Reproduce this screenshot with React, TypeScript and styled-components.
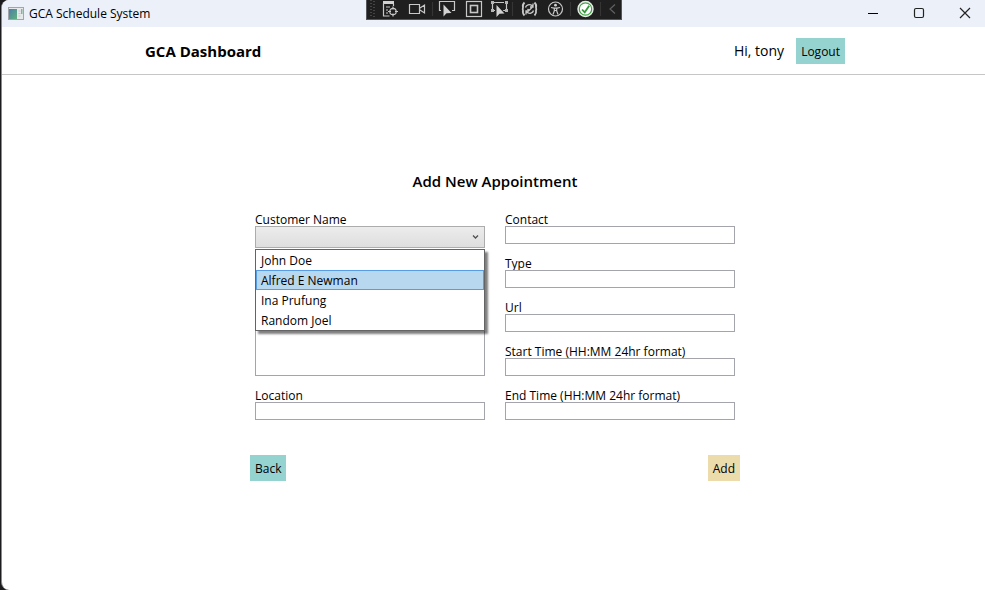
import { useState } from "react";
import styled, { createGlobalStyle } from "styled-components";

const GlobalStyle = createGlobalStyle`
  * { box-sizing: border-box; }
  html, body, #root { height: 100%; }
  body {
    margin: 0;
    background: #1c1c1e;
    color: #000;
    font: 12px/16px "Open Sans", "Noto Sans", sans-serif;
  }
  button, input, select, textarea { font: inherit; color: inherit; }
`;

const Window = styled.div`
  min-height: 100%;
  margin-left: 1px;
  border-left: 1px solid #8a8a8c;
  border-radius: 8px 0 0 8px;
  background: #fff;
  overflow: hidden;
`;

const TitleBar = styled.div`
  position: relative;
  display: flex;
  align-items: center;
  justify-content: space-between;
  height: 27px;
  padding-left: 6px;
  background: #ecf0f9;
`;

const AppName = styled.div`
  display: flex;
  align-items: center;
  gap: 5px;
`;

const WindowControls = styled.div`
  display: flex;
`;

const WindowButton = styled.button`
  display: grid;
  place-items: center;
  width: 46px;
  height: 27px;
  padding: 0 0 2px 6px;
  border: 0;
  background: none;
`;

const DebugBar = styled.div`
  position: absolute;
  top: 0;
  left: 50%;
  transform: translateX(-50%);
  display: flex;
  width: 256px;
  height: 20px;
  border: 1px solid #55555a;
  border-width: 0 1px 1px;
  background: #1f1f1f;
`;

const Header = styled.header`
  padding-left: 3px;
  border-bottom: 1px solid #c6c6c6;
`;

const HeaderInner = styled.div`
  display: flex;
  align-items: center;
  justify-content: space-between;
  max-width: 700px;
  height: 47px;
  margin: 0 auto;
  padding-top: 1px;
`;

const Brand = styled.h1`
  margin: 0;
  font-size: 15px;
  line-height: 20px;
  font-weight: 700;
`;

const Account = styled.div`
  display: flex;
  align-items: center;
  gap: 12px;
`;

const Greeting = styled.span`
  font-size: 14px;
  line-height: 20px;
`;

const ActionButton = styled.button<{ $tone?: "teal" | "sand" }>`
  height: 26px;
  padding: 2px 5px 0;
  border: 0;
  background: ${(p) => (p.$tone === "sand" ? "#ecdcab" : "#95d3d1")};
`;

const Main = styled.main`
  padding: 96px 0 20px 3px;
`;

const Form = styled.form`
  max-width: 490px;
  margin: 0 auto;
`;

const Title = styled.h2`
  margin: 0 0 19px;
  font-size: 15px;
  line-height: 20px;
  font-weight: 600;
  text-align: center;
`;

const Columns = styled.div`
  display: grid;
  grid-template-columns: 1fr 1fr;
  gap: 20px;
  padding: 0 5px;
`;

const Column = styled.div`
  display: flex;
  flex-direction: column;
  gap: 10px;
`;

const FieldBox = styled.div`
  display: flex;
  flex-direction: column;
`;

const Label = styled.label`
  padding-top: 4px;
  line-height: 12px;
`;

const TextInput = styled.input`
  width: 100%;
  height: 18px;
  padding: 0 3px;
  border: 1px solid #a3a4ac;
  background: #fff;
`;

const TextArea = styled.textarea`
  flex: 1;
  width: 100%;
  min-height: 60px;
  padding: 2px 3px;
  border: 1px solid #a3a4ac;
  resize: none;
`;

const Combo = styled.div`
  position: relative;
  display: grid;
  align-items: center;

  & > * { grid-area: 1 / 1; }
  & > svg { justify-self: end; margin-right: 6px; pointer-events: none; }
`;

const Select = styled.select`
  width: 100%;
  height: 22px;
  padding: 0 5px;
  border: 1px solid #acacac;
  border-radius: 0;
  outline: 0;
  appearance: none;
  background: linear-gradient(#ececec, #dedede);
`;

const Menu = styled.ul`
  position: absolute;
  z-index: 1;
  top: 100%;
  left: 0;
  right: 0;
  margin: 1px 0 0;
  padding: 0;
  border: 1px solid #646464;
  background: #fff;
  box-shadow: 3px 3px 2px rgba(0, 0, 0, 0.5);
  list-style: none;
`;

const Option = styled.li<{ $active: boolean }>`
  padding: 2px 4px 0;
  border: 1px solid ${(p) => (p.$active ? "#569de5" : "transparent")};
  background: ${(p) => (p.$active ? "#b8d8f0" : "transparent")};
  cursor: default;
`;

const Actions = styled.div`
  display: flex;
  justify-content: space-between;
  margin-top: 35px;
`;

const customers = ["John Doe", "Alfred E Newman", "Ina Prufung", "Random Joel"];

function Field({ id, label }: { id: string; label: string }) {
  return (
    <FieldBox>
      <Label htmlFor={id}>{label}</Label>
      <TextInput id={id} type="text" />
    </FieldBox>
  );
}

function CustomerField() {
  const [open, setOpen] = useState(true);
  const [value, setValue] = useState("");
  const [active, setActive] = useState(1);

  return (
    <FieldBox>
      <Label htmlFor="customer">Customer Name</Label>
      <Combo>
        <Select
          id="customer"
          value={value}
          onChange={(e) => setValue(e.target.value)}
          onMouseDown={(e) => {
            e.preventDefault();
            setOpen(!open);
          }}
        >
          <option value="" />
          {customers.map((name) => (
            <option key={name}>{name}</option>
          ))}
        </Select>
        <svg width="7" height="7" viewBox="0 0 7 7" fill="none" stroke="#505050" strokeWidth="1.300">
          <path d="M1 1.500 3.500 4 6 1.500" />
        </svg>
        {open && (
          <Menu role="listbox" aria-label="Customer Name">
            {customers.map((name, i) => (
              <Option
                key={name}
                role="option"
                aria-selected={i === active}
                $active={i === active}
                onMouseEnter={() => setActive(i)}
                onClick={() => {
                  setValue(name);
                  setOpen(false);
                }}
              >
                {name}
              </Option>
            ))}
          </Menu>
        )}
      </Combo>
    </FieldBox>
  );
}

function AppIcon() {
  return (
    <svg width="16" height="14" viewBox="0 0 16 14">
      <defs>
        <linearGradient id="pane" x1="0" y1="0" x2="1" y2="1">
          <stop offset="0" stopColor="#4d7fa8" />
          <stop offset="1" stopColor="#5fb27c" />
        </linearGradient>
      </defs>
      <rect x=".5" y=".5" width="15" height="12" fill="#e6e8ea" stroke="#a2a6aa" />
      <rect x="1" y="2" width="8" height="10" fill="url(#pane)" />
      <path d="M10.5 4h2M10.5 6.500h2M10.5 9h2" stroke="#c6cacd" />
      <rect x="13" y="2" width="1.500" height="5" fill="#7fb59a" />
    </svg>
  );
}

function DebugToolbar() {
  return (
    <DebugBar role="toolbar" aria-label="Debug">
      <svg width="254" height="19" viewBox="0 0 254 19" fill="none" stroke="#c8c8c8" strokeWidth="1.200">
        <path d="M4 0v18M7 1v18" stroke="#454545" strokeWidth="2" strokeDasharray="1 2" />
        <path d="M65.500 2v14M145.500 2v14M203.500 2v14M233.500 2v14" stroke="#353535" />

        <rect x="16" y="1" width="11" height="3" fill="#d2d2d2" stroke="none" />
        <path d="M16.500 3v13h6M19 7h4M19 10h2M19 13h2M26.500 4v2" />
        <circle cx="26" cy="11.500" r="3.200" />
        <path d="M26 6.500v3M26 13.500v3M21 11.500h3M28 11.500h3" />

        <path d="M42.500 4.500h10v9h-10zM53 8l4.500-3v8L53 10" />

        <path d="M74 10.500h-1.500V1.500h15v9H85" />
        <path d="M76.500 4.500v12l3-3.200 5-.3z" fill="#d2d2d2" stroke="#1f1f1f" strokeWidth="2" paintOrder="stroke" />

        <rect x="99.500" y="1.500" width="15" height="15" />
        <rect x="103.500" y="5.500" width="7" height="7" strokeWidth="1.600" />

        <path d="M127 2.500h10M125.500 4v6.500M139.500 4v6.500M126 10.500h2M135 10.500h4" />
        <path d="M124 1h3v3h-3zM138 1h3v3h-3zM138 9h3v3h-3zM124 9h3v3h-3z" fill="#b4b4b4" stroke="none" />
        <path d="M129.500 5v12l3-3.200 5-.3z" fill="#d2d2d2" stroke="#1f1f1f" strokeWidth="2" paintOrder="stroke" />

        <path d="M157.500 2.500c-2 2-2 3.500-1.500 5-.5 1.500-.5 2 0 3-.5 2 0 3.500 1.500 5M167.500 2.500c2 2 2 3.500 1.500 5 .5 1.500.5 2 0 3 .5 2 0 3.500-1.500 5" strokeWidth="1.800" />
        <path d="M158.500 7.500c.5-2.500 4-4 7-1.500M166 3.500V7h-3M166.500 10.500c-.5 2.500-4 4-7 1.500M159 14.500V11h3M160.500 9l1.500 1.500 3-3" strokeWidth="1.300" />

        <circle cx="188.500" cy="9" r="7" />
        <circle cx="188.500" cy="5.200" r="1.400" fill="#d2d2d2" stroke="none" />
        <path d="M184 7.500l3 .7h3l3-.7M187.300 8v3l-1.300 3.500M189.700 8v3l1.300 3.500M187.300 10.500h2.400" />

        <circle cx="218.500" cy="9" r="7.600" fill="#fff" stroke="#e4f0e4" />
        <circle cx="218.500" cy="9" r="6.200" fill="#fff" stroke="#43a047" strokeWidth="1.200" />
        <path d="m215 9.500 2.700 2.800 4.500-6.600" stroke="#2f9a38" strokeWidth="1.800" />

        <path d="m248 4.500-5 4.500 5 4.500" stroke="#606060" />
      </svg>
    </DebugBar>
  );
}

export default function App() {
  return (
    <>
      <GlobalStyle />
      <Window>
        <TitleBar>
          <AppName>
            <AppIcon />
            <span>GCA Schedule System</span>
          </AppName>
          <DebugToolbar />
          <WindowControls>
            <WindowButton type="button" aria-label="Minimize">
              <svg width="12" height="12" stroke="#000">
                <path d="M1 6.500h10" />
              </svg>
            </WindowButton>
            <WindowButton type="button" aria-label="Maximize">
              <svg width="12" height="12" fill="none" stroke="#222" strokeWidth="1.200">
                <rect x="1.500" y="1.500" width="9" height="9" rx="1.500" />
              </svg>
            </WindowButton>
            <WindowButton type="button" aria-label="Close">
              <svg width="12" height="12" stroke="#222" strokeWidth="1.200">
                <path d="m1 1 10 10M11 1 1 11" />
              </svg>
            </WindowButton>
          </WindowControls>
        </TitleBar>
        <Header>
          <HeaderInner>
            <Brand>GCA Dashboard</Brand>
            <Account>
              <Greeting>Hi, tony</Greeting>
              <ActionButton type="button">Logout</ActionButton>
            </Account>
          </HeaderInner>
        </Header>
        <Main>
          <Form onSubmit={(e) => e.preventDefault()}>
            <Title>Add New Appointment</Title>
            <Columns>
              <Column>
                <CustomerField />
                <TextArea aria-label="Description" />
                <Field id="location" label="Location" />
              </Column>
              <Column>
                <Field id="contact" label="Contact" />
                <Field id="type" label="Type" />
                <Field id="url" label="Url" />
                <Field id="start" label="Start Time (HH:MM 24hr format)" />
                <Field id="end" label="End Time (HH:MM 24hr format)" />
              </Column>
            </Columns>
            <Actions>
              <ActionButton type="button">Back</ActionButton>
              <ActionButton type="submit" $tone="sand">Add</ActionButton>
            </Actions>
          </Form>
        </Main>
      </Window>
    </>
  );
}
